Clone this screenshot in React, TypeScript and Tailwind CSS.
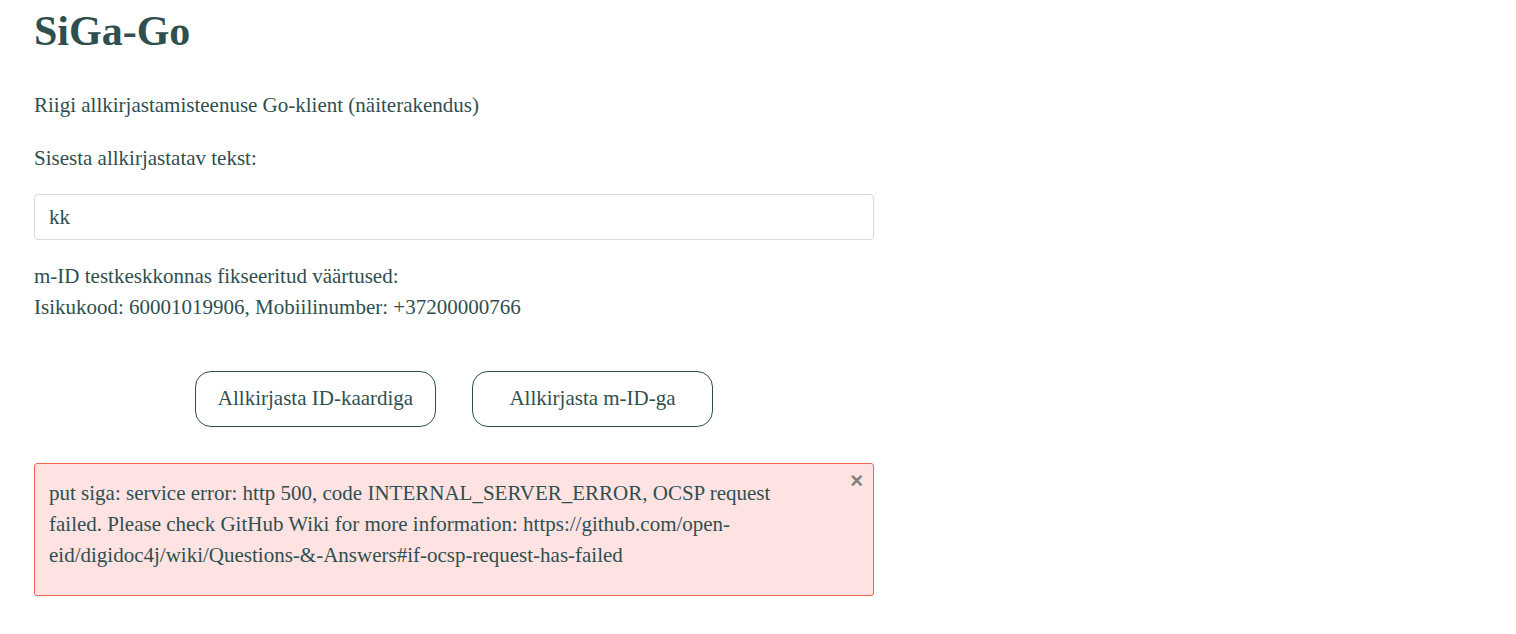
import React from "react";

export default function App() {
  return (
    <div className="min-h-[634px] bg-white text-[#2f4f4f]" style={{ fontFamily: '"Liberation Serif", "Times New Roman", serif' }}>
      <div className="ml-[34px] w-[840px] flex flex-col">
        <h1 className="text-[42px] font-bold leading-[50px] mt-[6px]">SiGa-Go</h1>
        <p className="text-[21px] leading-[31px] mt-[34px]">Riigi allkirjastamisteenuse Go-klient (näiterakendus)</p>
        <p className="text-[21px] leading-[31px] mt-[22px]">Sisesta allkirjastatav tekst:</p>
        <input
          className="mt-[20px] h-[46px] w-full rounded-[4px] border border-[#d9d9d9] px-[14px] text-[21px] text-[#2f4f4f] outline-none"
          style={{ fontFamily: '"Liberation Serif", "Times New Roman", serif' }}
          defaultValue="kk"
        />
        <p className="text-[21px] leading-[31px] mt-[21px]">
          m-ID testkeskkonnas fikseeritud väärtused:
          <br />
          Isikukood: 60001019906, Mobiilinumber: +37200000766
        </p>
        <div className="mt-[48px] flex justify-center gap-[36px]">
          <button className="h-[56px] w-[241px] rounded-[16px] border border-[#2f4f4f] bg-white text-[21px] text-[#2f4f4f]">
            Allkirjasta ID-kaardiga
          </button>
          <button className="h-[56px] w-[241px] rounded-[16px] border border-[#2f4f4f] bg-white text-[21px] text-[#2f4f4f]">
            Allkirjasta m-ID-ga
          </button>
        </div>
        <div className="relative mt-[36px] rounded-[3px] border border-[#ef6550] bg-[#ffe3e2] pl-[14px] pr-[88px] pt-[14px] pb-[24px] text-[21px] leading-[31px]">
          put siga: service error: http 500, code INTERNAL_SERVER_ERROR, OCSP request failed. Please check GitHub Wiki for more information: https://github.com/open-eid/digidoc4j/wiki/Questions-&amp;-Answers#if-ocsp-request-has-failed
          <span className="absolute right-[10px] top-[6px] text-[22px] font-bold leading-[22px] text-[#808080]" style={{ fontFamily: '"Liberation Sans", Arial, sans-serif' }}>×</span>
        </div>
      </div>
    </div>
  );
}
